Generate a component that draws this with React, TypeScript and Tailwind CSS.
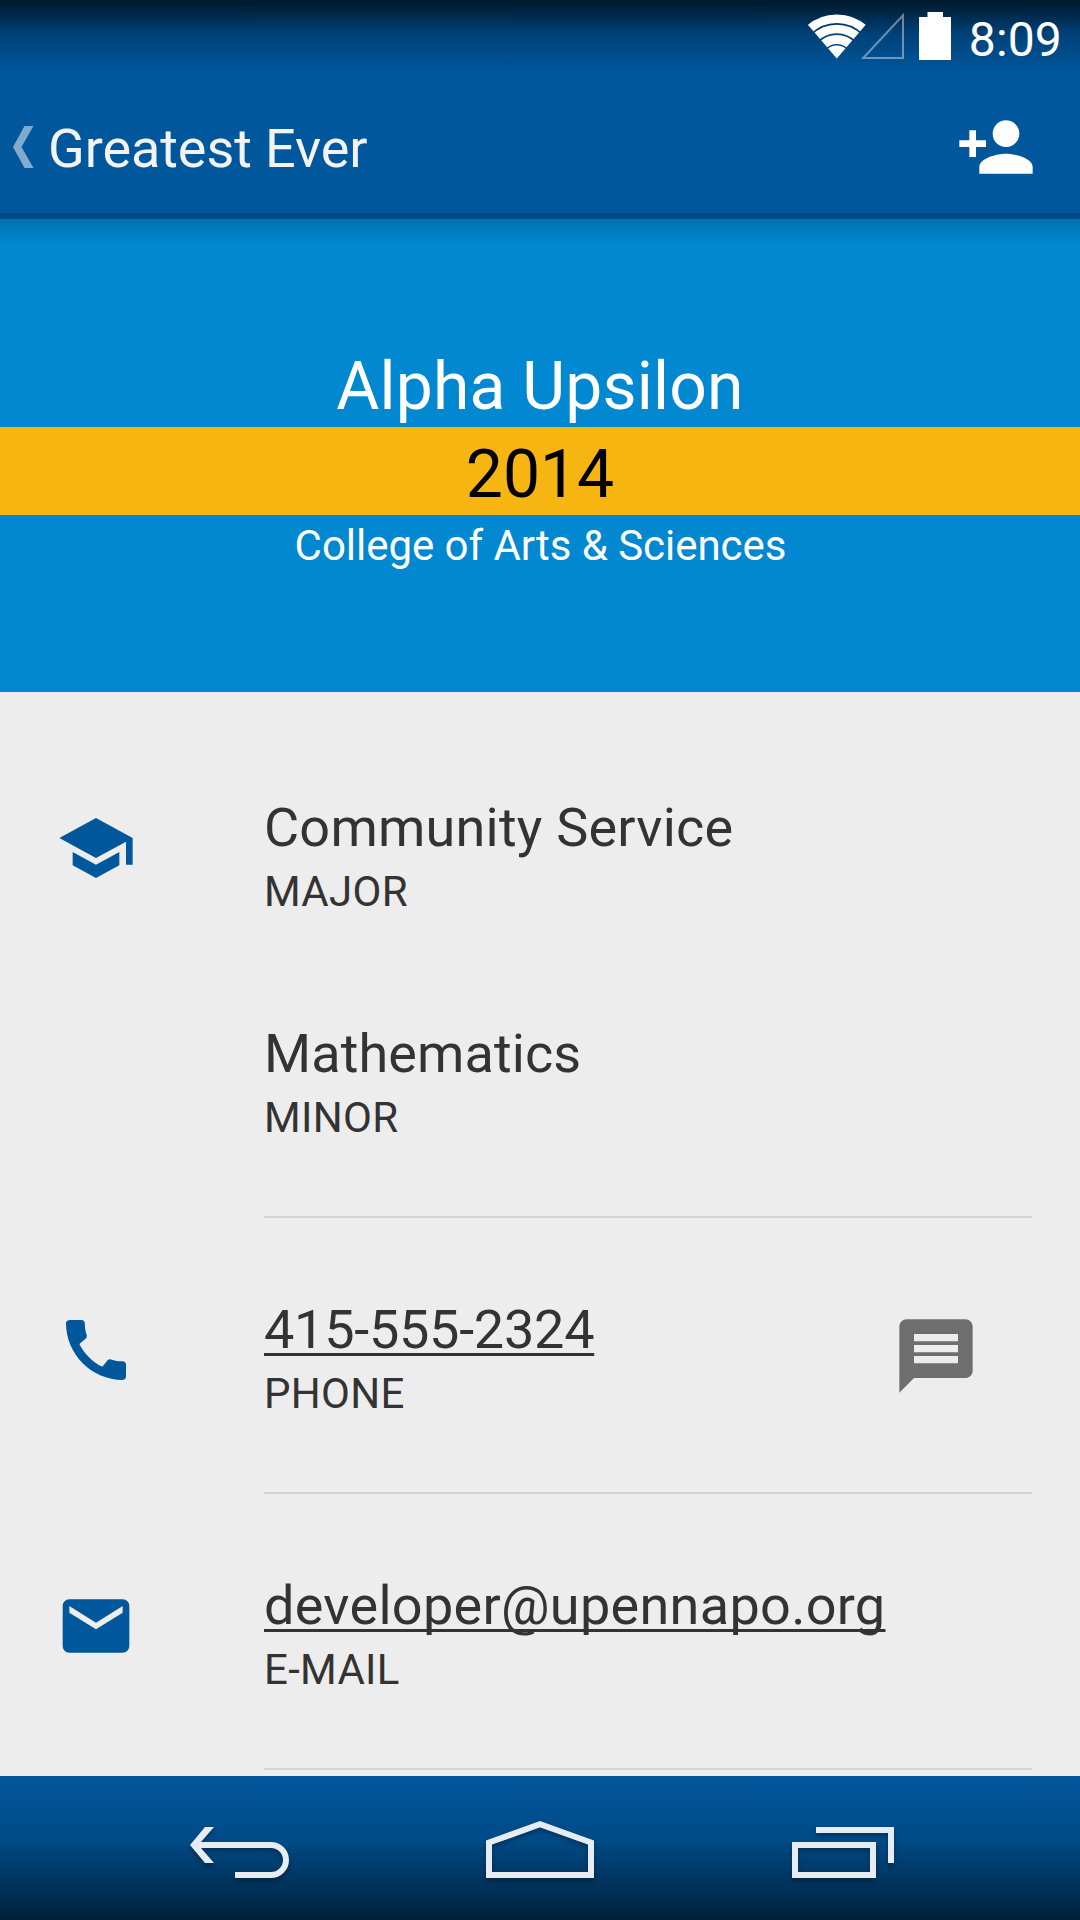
import type { ReactNode } from "react";

const PATHS = {
  school:
    "M5 13.18v4L12 21l7-3.82v-4L12 17l-7-3.82zM12 3L1 9l11 6 9-4.91V17h2V9L12 3z",
  phone:
    "M20.01 15.38c-1.23 0-2.42-.2-3.53-.56-.35-.12-.74-.03-1.01.24l-1.57 1.97c-2.83-1.35-5.48-3.9-6.89-6.83l1.95-1.66c.27-.28.35-.67.24-1.02-.37-1.11-.56-2.3-.56-3.53 0-.54-.45-.99-.99-.99H4.19C3.65 3 3 3.24 3 3.99 3 13.28 10.73 21 20.01 21c.71 0 .99-.63.99-1.18v-3.45c0-.54-.45-.99-.99-.99z",
  mail: "M20 4H4c-1.1 0-1.99.9-1.99 2L2 18c0 1.1.9 2 2 2h16c1.1 0 2-.9 2-2V6c0-1.1-.9-2-2-2zm0 4l-8 5-8-5V6l8 5 8-5v2z",
  message:
    "M20 2H4c-1.1 0-1.99.9-1.99 2L2 22l4-4h14c1.1 0 2-.9 2-2V4c0-1.1-.9-2-2-2zm-2 12H6v-2h12v2zm0-3H6V9h12v2zm0-3H6V6h12v2z",
  personAdd:
    "M15 12c2.21 0 4-1.79 4-4s-1.79-4-4-4-4 1.79-4 4 1.79 4 4 4zm-9-2V7H4v3H1v2h3v3h2v-3h3v-2H6zm9 4c-2.67 0-8 1.34-8 4v2h16v-2c0-2.66-5.33-4-8-4z",
};

function Icon({ d, className }: { d: string; className: string }) {
  return (
    <svg viewBox="0 0 24 24" fill="currentColor" className={className}>
      <path d={d} />
    </svg>
  );
}

function StatusBar() {
  return (
    <div className="flex h-[75px] shrink-0 items-start justify-end bg-linear-to-b from-[#001c33] from-5% via-[#004178] via-45% to-[#01579b] to-95% pr-[18px] text-white">
      <svg viewBox="0 0 60 46" className="mt-[14px] h-[46px] w-[60px]">
        <defs>
          <clipPath id="wifi-fan">
            <path d="M29.800 44.500L0.400 10.200V0H59.200V10.200z" />
          </clipPath>
        </defs>
        <g clipPath="url(#wifi-fan)" fill="none" stroke="#fff">
          <circle cx="29.800" cy="46" r="41.300" strokeWidth="8.600" />
          <circle cx="29.800" cy="46" r="31" strokeWidth="8.600" />
          <circle cx="29.800" cy="46" r="20.500" strokeWidth="9" />
          <circle cx="29.800" cy="45.500" r="7" strokeWidth="14" />
        </g>
      </svg>
      <svg viewBox="0 0 46 50" className="-ml-[7px] mt-[10px] h-[50px] w-[46px]">
        <path
          d="M3.2 48H43V5.2z"
          fill="none"
          stroke="#fff"
          strokeOpacity="0.42"
          strokeWidth="2"
        />
      </svg>
      <svg viewBox="0 0 32 48" className="ml-[13px] mt-[12px] h-[48px] w-[32px]" fill="#fff">
        <path d="M8.5 0h15.500v5H32v43H0V5h8.500z" />
      </svg>
      <span className="ml-[18px] mt-[9px] text-[48px] leading-[61px] tracking-[0.15px]">8:09</span>
    </div>
  );
}

function ActionBar() {
  return (
    <header className="flex h-[144px] shrink-0 items-center border-b-[6px] border-[#014b86] bg-[#01579b] pr-[44px] pt-[5px]">
      <svg viewBox="0 0 21 42" className="ml-[13px] h-[42px] w-[21px]" fill="#80abcd">
        <path d="M11.500 0h9L8.500 21l12 21h-9L0 21z" />
      </svg>
      <h1 className="ml-[14px] mt-[5px] flex-1 text-[54px] leading-[64px] tracking-[-0.08px] text-[#f3f3f3]">
        Greatest Ever
      </h1>
      <Icon d={PATHS.personAdd} className="size-[80px] text-white" />
    </header>
  );
}

function Hero() {
  return (
    <section className="relative h-[473px] shrink-0 bg-[#0288d1] pt-[128px] text-center text-white">
      <div className="absolute inset-x-0 top-0 h-[27px] bg-linear-to-b from-black/16 to-transparent" />
      <div className="text-[66px] leading-[80px] tracking-[0.2px]">Alpha Upsilon</div>
      <div className="h-[88px] bg-[#f6b511] text-[66px] leading-[96px] text-black">2014</div>
      <div className="pl-px text-[42px] leading-[62px] tracking-[-0.04px]">
        College of Arts &amp; Sciences
      </div>
    </section>
  );
}

function Entry({
  title,
  label,
  link,
  tracking,
}: {
  title: string;
  label: string;
  link?: boolean;
  tracking: string;
}) {
  return (
    <div className="text-[#333333]">
      <div className={`text-[54px] leading-[64px] ${tracking}`}>
        {link ? (
          <span className="underline decoration-[3px] underline-offset-[5px] [text-decoration-skip-ink:none]">
            {title}
          </span>
        ) : (
          title
        )}
      </div>
      <div className="text-[42px] leading-[64px] tracking-[0.3px]">{label}</div>
    </div>
  );
}

function Row({
  icon,
  action,
  first,
  children,
}: {
  icon: string;
  action?: ReactNode;
  first?: boolean;
  children: ReactNode;
}) {
  return (
    <div className={first ? "flex pl-[56px] pr-[48px] pt-[24px]" : "flex pl-[56px] pr-[48px]"}>
      <Icon d={icon} className="mr-[128px] mt-[92px] size-[80px] shrink-0 text-[#01579b]" />
      <div className="flex flex-1 justify-between border-b-2 border-[#d4d4d4] pb-[66px] pt-[80px]">
        <div className="flex flex-col gap-[98px]">{children}</div>
        {action}
      </div>
    </div>
  );
}

function NavBar() {
  return (
    <nav className="flex h-[144px] shrink-0 items-center justify-center gap-[130px] bg-linear-to-b from-[#01579b] via-[#004a86] via-45% to-[#00213b]">
      <svg
        viewBox="0 0 168 144"
        className="h-[144px] w-[168px] drop-shadow-[0_3px_2px_rgba(0,0,0,0.3)]"
      >
        <g transform="translate(-158 0)" fill="none" stroke="#e6ecf2" strokeWidth="6">
          <path d="M198 69h73a15 15 0 0 1 0 30H235" />
          <path
            d="M205 51h9l-13 15v6l13 15h-9l-15-18z"
            fill="#e6ecf2"
            stroke="none"
          />
        </g>
      </svg>
      <svg
        viewBox="0 0 168 144"
        className="h-[144px] w-[168px] drop-shadow-[0_3px_2px_rgba(0,0,0,0.3)]"
      >
        <path
          d="M33 99V66.500L84 48.200l51 18.300V99z"
          fill="none"
          stroke="#e6ecf2"
          strokeWidth="6"
        />
      </svg>
      <svg
        viewBox="0 0 168 144"
        className="h-[144px] w-[168px] drop-shadow-[0_3px_2px_rgba(0,0,0,0.3)]"
      >
        <g fill="none" stroke="#e6ecf2" strokeWidth="6">
          <path d="M41 69h78v30H41z" />
          <path d="M62 54h75v33" />
        </g>
      </svg>
    </nav>
  );
}

export default function App() {
  return (
    <div className="flex h-[1920px] w-[1080px] flex-col overflow-hidden bg-[#ededed] font-['Roboto',sans-serif]">
      <StatusBar />
      <ActionBar />
      <Hero />
      <main className="min-h-0 flex-1 overflow-hidden">
        <Row icon={PATHS.school} first>
          <Entry title="Community Service" label="MAJOR" tracking="tracking-[0.22px]" />
          <Entry title="Mathematics" label="MINOR" tracking="tracking-[0.1px]" />
        </Row>
        <Row
          icon={PATHS.phone}
          action={
            <Icon
              d={PATHS.message}
              className="-mb-4 mr-[52px] mt-[14px] size-[88px] shrink-0 text-[#6e6e6e]"
            />
          }
        >
          <Entry title="415-555-2324" label="PHONE" link tracking="tracking-[-0.26px]" />
        </Row>
        <Row icon={PATHS.mail}>
          <Entry
            title="developer@upennapo.org"
            label="E-MAIL"
            link
            tracking="tracking-[0.3px]"
          />
        </Row>
      </main>
      <NavBar />
    </div>
  );
}
